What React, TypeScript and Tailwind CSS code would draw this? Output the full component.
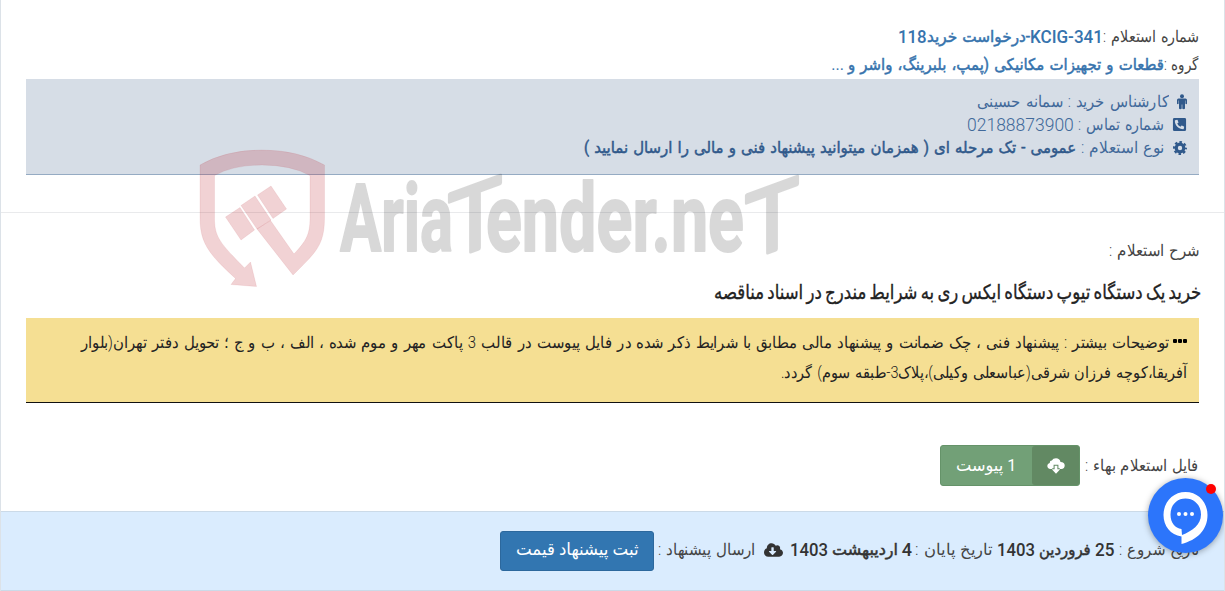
import React, { useLayoutEffect, useRef, useState } from 'react';
import { FaPhoneSquareAlt, FaCloudDownloadAlt } from 'react-icons/fa';

interface FitProps {
  width: number;
  className?: string;
  children: React.ReactNode;
}

// Keeps a run of text on one line and squeezes it into the given width
const Fit: React.FC<FitProps> = ({ width, className = '', children }) => {
  const ref = useRef<HTMLSpanElement>(null);
  const [scale, setScale] = useState(1);

  useLayoutEffect(() => {
    if (ref.current) setScale(width / ref.current.offsetWidth);
  }, [width]);

  return (
    <span className={`flex shrink-0 ${className}`} style={{ width }}>
      <span
        ref={ref}
        className="inline-block shrink-0 origin-right whitespace-nowrap"
        style={{ transform: `scaleX(${scale})` }}
      >
        {children}
      </span>
    </span>
  );
};

const MaleIcon = () => (
  <svg width="10" height="16" viewBox="0 0 10 16" fill="currentColor" className="text-[#30598b]">
    <circle cx="5" cy="2.200" r="2" />
    <path d="M1.500 4.500H8.500Q10 4.500 10 6V9.700Q9.200 10.600 8.400 9.700V6.600H8V14.500Q7.200 15.800 5.300 14.800V10.500H4.700V14.800Q2.800 15.800 2 14.500V6.600H1.600V9.700Q.8 10.600 0 9.700V6Q0 4.500 1.500 4.500Z" />
  </svg>
);

const CogIcon = () => (
  <svg width="14" height="14" viewBox="0 0 14 14" fill="none" stroke="currentColor" className="text-[#30598b]">
    <circle cx="7" cy="7" r="3.800" strokeWidth="3.200" />
    <circle cx="7" cy="7" r="5.900" strokeWidth="2.200" strokeDasharray="2.500 2.134" strokeDashoffset="1.250" />
  </svg>
);

const CloudIcon = () => (
  <svg width="18" height="16" viewBox="0 0 18 16" fill="currentColor">
    <path d="M3.500 11Q.3 10.700.3 7.800Q.4 5.400 2.700 4.900Q2.700 2.600 4.800 2.600Q6.100.3 9 .3Q12.700.4 13.500 4Q17.700 4 17.700 7.500Q17.600 10.800 14.300 11H13.200L12.500 10.200H11.400V6.800H6.600V10.200H5.500L4.800 11Z" />
    <path d="M7.600 7.800H10.400V11.200H13.200L9 15.800L4.800 11.200H7.600Z" />
  </svg>
);

const Watermark = () => (
  <svg
    className="pointer-events-none absolute top-[140px] left-[189px] z-10 overflow-visible"
    width="620"
    height="160"
    viewBox="190 140 620 160"
    direction="ltr"
  >
    <g fill="#b81d2a" fillOpacity="0.2" stroke="#b81d2a" strokeOpacity="0.08">
      <path d="M200 165Q226 150 262 150T324.500 165V218C324.500 246 315 253 293 275L257 229L270.500 220.500L294 254C306 241 310 235 310 218V175.500Q291 165 262 165T214.500 175.500V218C214.500 237 220 243 244.500 268L250.500 262L256.500 286.500L231 284.500L235.500 278.500C210 255 200 244 200 218Z" />
      <path d="M241 205.500L255 196L271 220L257 229Z" />
      <path d="M225.500 217L240 207.500L254.500 230L241 240Z" />
      <path d="M257.500 195L271 186L286.500 209L273 218.500Z" />
    </g>
    <g fill="#000" stroke="#000" strokeWidth="2" strokeLinejoin="round" opacity="0.15">
      <g fontFamily="Roboto, sans-serif" fontWeight="700" fontSize="95">
        <text x="340" y="251" textLength="113" lengthAdjust="spacingAndGlyphs">Aria</text>
        <text x="486" y="251" textLength="258" lengthAdjust="spacingAndGlyphs">ender.ne</text>
      </g>
      <g fontFamily="'DejaVu Sans', sans-serif" fontSize="89" strokeWidth="4">
        <text transform="translate(450 259) skewY(-20)" textLength="50" lengthAdjust="spacingAndGlyphs">T</text>
        <text transform="translate(747 260) skewY(-20)" textLength="50" lengthAdjust="spacingAndGlyphs">T</text>
      </g>
    </g>
  </svg>
);

const ChatButton = () => (
  <button className="absolute top-[478px] left-[1147px] z-20 size-[75px] rounded-full bg-[#2c75fb] shadow-[0_1px_6px_rgba(0,0,0,0.35)]">
    <svg width="75" height="75" viewBox="0 0 75 75">
      <path
        fill="#fff"
        fillRule="evenodd"
        d="M37.500 14C50 14 59.500 24 59.500 37C59.500 52 49 62 33.500 66V58.500C22.500 57 15.500 48 15.500 37C15.500 24 25 14 37.500 14ZM37.500 20.500C28.500 20.500 22.500 27.500 22.500 36.500C22.500 45 27 50 33.500 51L34 57C44 53 53 47 53 36.500C53 27.500 46.500 20.500 37.500 20.500Z"
      />
      <g fill="#fff">
        <circle cx="31" cy="36" r="2" />
        <circle cx="37.500" cy="36" r="2" />
        <circle cx="44" cy="36" r="2" />
      </g>
    </svg>
    <span className="absolute top-1.5 right-[7px] size-[10px] rounded-full bg-[#fe0000]" />
  </button>
);

const App: React.FC = () => {
  return (
    <div
      dir="rtl"
      className="relative h-[591px] w-[1225px] overflow-hidden border-x border-[#dce2e8] bg-white font-[Roboto,'DejaVu_Sans',sans-serif] text-[16px] leading-6 [word-spacing:1.5px] text-[#444]"
    >
      <header className="h-[212px] px-[25px] pt-[23px]">
        <div className="flex h-[28px] items-center">
          <Fit width={96} className="font-light">شماره استعلام :</Fit>
          <div className="flex text-[#3673ad]">
            <Fit width={73} className="text-[18px] font-medium">KCIG-341</Fit>
            <Fit width={103} className="[-webkit-text-stroke:0.5px]">-درخواست خرید</Fit>
            <Fit width={29} className="text-[18px] font-medium">118</Fit>
          </div>
        </div>
        <div className="flex h-[28px] items-center">
          <Fit width={35} className="font-light">گروه :</Fit>
          <Fit width={316} className="text-[#3673ad] [-webkit-text-stroke:0.5px]">قطعات و تجهیزات مکانیکی (پمپ، بلبرینگ، واشر و</Fit>
          <Fit width={13} className="mr-1 text-[#3673ad]">...</Fit>
        </div>
        <div className="h-[96px] border-b border-[#95abc3] bg-[#d6dde6] px-3 pt-[11px] text-[#41699a]">
          <div className="flex h-[23px] items-center">
            <MaleIcon />
            <Fit width={192} className="mr-2 font-light">کارشناس خرید : سمانه حسینی</Fit>
          </div>
          <div className="flex h-[23px] items-center">
            <FaPhoneSquareAlt className="size-[15px] text-[#30598b]" />
            <Fit width={85} className="mr-[9px] font-light">شماره تماس :</Fit>
            <Fit width={107} className="mr-1 text-[18px] font-light">02188873900</Fit>
          </div>
          <div className="flex h-[23px] items-center">
            <CogIcon />
            <Fit width={83} className="mr-[9px] font-light">نوع استعلام :</Fit>
            <Fit width={492} className="mr-[5px] text-[#30598b] [-webkit-text-stroke:0.5px]">عمومی - تک مرحله ای ( همزمان میتوانید پیشنهاد فنی و مالی را ارسال نمایید )</Fit>
          </div>
        </div>
      </header>

      <main className="h-[299px] border-t border-[#e9eaec] px-[25px]">
        <div className="flex h-[68px] items-center pt-[7px]">
          <Fit width={90} className="font-light">شرح استعلام :</Fit>
        </div>
        <h1 className="-mr-0.5 flex h-[37px] items-start text-[20px] leading-[22px] font-normal text-[#222]">
          <Fit width={487} className="[word-spacing:-1px] [-webkit-text-stroke:0.35px]">خرید یک دستگاه تیوپ دستگاه ایکس ری به شرایط مندرج در اسناد مناقصه</Fit>
        </h1>
        <div className="h-[85px] border-b border-[#111] bg-[#f5df93] px-3 pt-[10px] text-[#222]">
          <div className="flex h-[30px] items-center">
            <span className="mb-1 flex w-[14px] gap-px">
              <i className="size-1 rounded-[1px] bg-black" />
              <i className="size-1 rounded-[1px] bg-black" />
              <i className="size-1 rounded-[1px] bg-black" />
            </span>
            <Fit width={1088} className="mr-1 font-light">
              توضیحات بیشتر : پیشنهاد فنی ، چک ضمانت و پیشنهاد مالی مطابق با شرایط ذکر شده در فایل پیوست در قالب 3 پاکت مهر و موم شده ، الف ، ب و ج ؛ تحویل دفتر تهران(بلوار
            </Fit>
          </div>
          <div className="flex h-[30px] items-center">
            <Fit width={406} className="font-light">آفریقا،کوچه فرزان شرقی(عباسعلی وکیلی)،پلاک3-طبقه سوم) گردد.</Fit>
          </div>
        </div>
        <div className="mt-[42px] flex items-center">
          <Fit width={114} className="font-light">فایل استعلام بهاء :</Fit>
          <button className="mr-[5px] flex h-[41px] w-[140px] overflow-hidden rounded-[3px] border border-[#659369] bg-[#72a077] text-white">
            <span className="flex h-full w-[47px] items-center justify-center rounded-l-[3px] bg-[#628963]">
              <CloudIcon />
            </span>
            <Fit width={60} className="mr-4 -mt-0.5 self-center text-[17px]">1 پیوست</Fit>
          </button>
        </div>
      </main>

      <footer className="flex h-20 items-center border-y border-[#cbdae8] bg-[#daecfe] px-[25px] pb-0.5">
        <Fit width={80} className="font-light">تاریخ شروع :</Fit>
        <div className="mr-[5px] flex gap-1 text-[#333]">
          <Fit width={19} className="text-[18px] font-medium">25</Fit>
          <Fit width={52} className="[-webkit-text-stroke:0.5px]">فروردین</Fit>
          <Fit width={38} className="text-[18px] font-medium">1403</Fit>
        </div>
        <Fit width={77} className="mr-[5px] font-light">تاریخ پایان :</Fit>
        <div className="mr-[3px] flex gap-1 text-[#333]">
          <Fit width={10} className="text-[18px] font-medium">4</Fit>
          <Fit width={66} className="[-webkit-text-stroke:0.5px]">اردیبهشت</Fit>
          <Fit width={38} className="text-[18px] font-medium">1403</Fit>
        </div>
        <FaCloudDownloadAlt className="mr-[7px] h-[18px] w-[19px] text-[#333]" />
        <Fit width={97} className="mr-[9px] font-light">ارسال پیشنهاد :</Fit>
        <button className="relative top-px mr-1 flex h-10 w-[154px] items-center justify-center rounded-[3px] border border-[#2c689d] bg-[#3276b1] pb-1 text-white">
          <Fit width={123} className="text-[17px]">ثبت پیشنهاد قیمت</Fit>
        </button>
      </footer>

      <Watermark />
      <ChatButton />
    </div>
  );
};

export default App;
